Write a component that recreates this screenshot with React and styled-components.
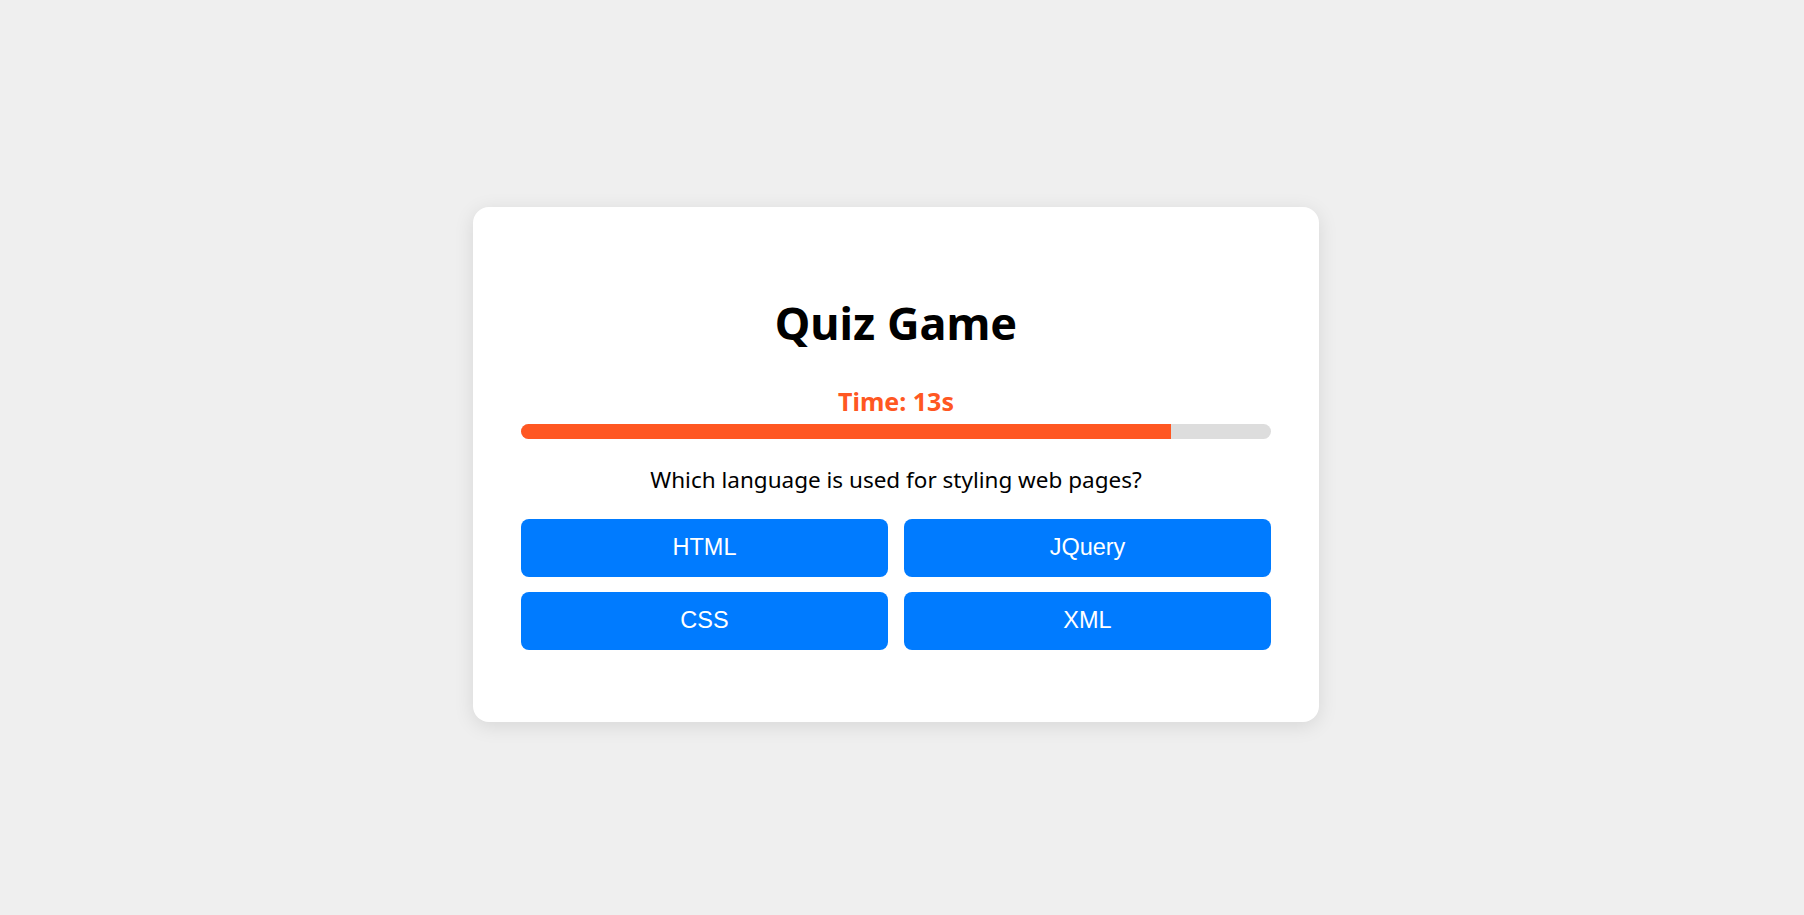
import { styled, createGlobalStyle } from "styled-components";

const GlobalStyle = createGlobalStyle`
	* {
		box-sizing: border-box;
	}
	body {
		margin: 0;
		background: #efefef;
		font-family: "Segoe UI", "Noto Sans", sans-serif;
	}
`;

const question = {
	text: "Which language is used for styling web pages?",
	options: ["HTML", "JQuery", "CSS", "XML"],
};

const TOTAL = 15;
const timeLeft = 13;

export default function App() {
	return (
		<>
			<GlobalStyle />
			<Page>
				<Card>
					<Title>Quiz Game</Title>
					<Timer>Time: {timeLeft}s</Timer>
					<Track>
						<Fill style={{ width: `${(timeLeft / TOTAL) * 100}%` }} />
					</Track>
					<Question>{question.text}</Question>
					<Options>
						{question.options.map((opt) => (
							<Option key={opt}>{opt}</Option>
						))}
					</Options>
				</Card>
			</Page>
		</>
	);
}

const Page = styled.div`
	min-height: 100vh;
	display: flex;
	align-items: center;
	justify-content: center;
	padding: 13px 12px 0 0;
`;

const Card = styled.div`
	width: 846px;
	padding: 92px 48px 72px;
	background: #fff;
	border-radius: 16px;
	box-shadow: 0 4px 20px rgba(0, 0, 0, 0.1);
	text-align: center;
`;

const Title = styled.h1`
	margin: 0 0 40px;
	font-size: 45px;
	line-height: 48px;
	font-weight: 700;
	color: #000;
`;

const Timer = styled.div`
	font-size: 25px;
	line-height: 28px;
	font-weight: 700;
	color: #ff5722;
	margin-bottom: 9px;
`;

const Track = styled.div`
	height: 15px;
	background: #dddddd;
	border-radius: 8px;
	overflow: hidden;
	margin-bottom: 27px;
`;

const Fill = styled.div`
	height: 100%;
	background: #ff5722;
`;

const Question = styled.p`
	margin: 0 0 25px;
	font-size: 22.5px;
	line-height: 28px;
	color: #000;
`;

const Options = styled.div`
	display: grid;
	grid-template-columns: 1fr 1fr;
	grid-auto-rows: 58px;
	gap: 15px 16px;
`;

const Option = styled.button`
	border: none;
	border-radius: 8px;
	background: #007bff;
	color: #fff;
	font-family: "Liberation Sans", Arial, sans-serif;
	font-size: 23.5px;
	cursor: pointer;
`;
